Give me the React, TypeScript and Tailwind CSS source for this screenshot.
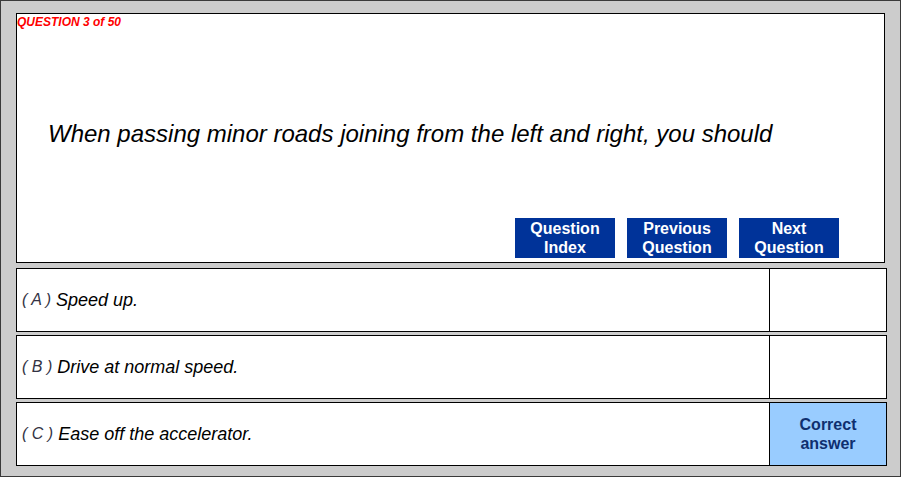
import React from "react";

const font = { fontFamily: '"Liberation Sans", Arial, sans-serif' };

function Row({ letter, text, correct }: { letter: string; text: string; correct?: boolean }) {
  return (
    <div className="flex h-[64px] w-[871px] border border-black bg-white">
      <div className="flex flex-1 items-center pl-[5px] italic text-[18px] text-black">
        <span className="text-[#333344] text-[16px] mr-[5px]">( {letter} )</span>
        <span>{text}</span>
      </div>
      <div
        className={
          "flex w-[117px] items-center justify-center border-l border-black text-center font-bold text-[16px] leading-[19px] " +
          (correct ? "bg-[#99ccff] text-[#0f2f6f]" : "bg-white")
        }
      >
        {correct ? (
          <span>
            Correct
            <br />
            answer
          </span>
        ) : null}
      </div>
    </div>
  );
}

function Btn({ a, b }: { a: string; b: string }) {
  return (
    <div className="flex h-[40px] w-[100px] flex-col items-center justify-center bg-[#003399] text-center font-bold text-[16px] leading-[19px] text-white">
      <span>{a}</span>
      <span>{b}</span>
    </div>
  );
}

export default function App() {
  return (
    <div style={font} className="h-[478px] w-[902px] overflow-hidden bg-white">
      <div className="h-[477px] w-[901px] border border-[#3a3a3a] bg-[#cccccc] pl-[15px] pt-[12px]">
        <div className="flex h-[250px] w-[869px] flex-col border border-black bg-white">
          <div className="pl-[0px] pt-[1px] text-[12px] font-bold italic leading-[14px] text-[#ff0000]">
            QUESTION 3 of 50
          </div>
          <div className="mt-[91px] pl-[31px] text-[24px] italic leading-[28px] text-black">
            When passing minor roads joining from the left and right, you should
          </div>
          <div className="mt-[70px] flex justify-end gap-[12px] pr-[45px]">
            <Btn a="Question" b="Index" />
            <Btn a="Previous" b="Question" />
            <Btn a="Next" b="Question" />
          </div>
        </div>
        <div className="mt-[5px] flex flex-col gap-[3px]">
          <Row letter="A" text="Speed up." />
          <Row letter="B" text="Drive at normal speed." />
          <Row letter="C" text="Ease off the accelerator." correct />
        </div>
      </div>
    </div>
  );
}
